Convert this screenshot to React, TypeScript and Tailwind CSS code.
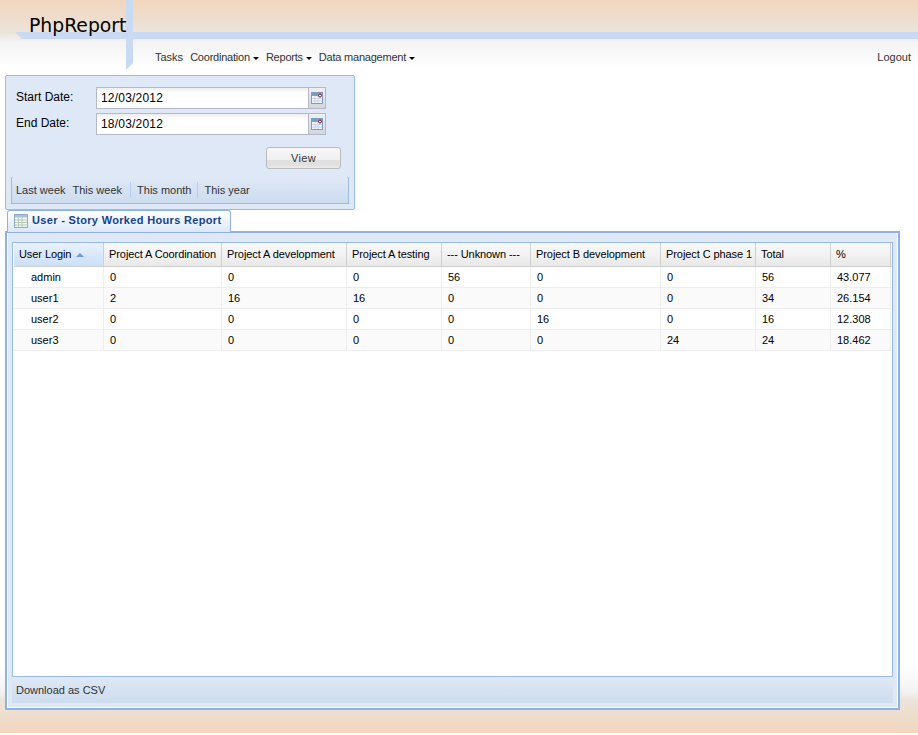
const menu = [
  { label: 'Tasks', arrow: false },
  { label: 'Coordination', arrow: true },
  { label: 'Reports', arrow: true },
  { label: 'Data management', arrow: true },
]

const columns = ['Project A Coordination', 'Project A development', 'Project A testing', '--- Unknown ---', 'Project B development', 'Project C phase 1', 'Total', '%']

const rows = [
  ['admin', '0', '0', '0', '56', '0', '0', '56', '43.077'],
  ['user1', '2', '16', '16', '0', '0', '0', '34', '26.154'],
  ['user2', '0', '0', '0', '0', '16', '0', '16', '12.308'],
  ['user3', '0', '0', '0', '0', '0', '24', '24', '18.462'],
]

const gridCols = 'grid grid-cols-[90px_118px_125px_95px_89px_130px_95px_75px_60px]'

function CalendarIcon() {
  return (
    <svg width="12" height="12" viewBox="0 0 12 12">
      <rect x="0.5" y="0.5" width="11" height="11" fill="#f4f7fb" stroke="#7f9dc4" />
      <rect x="1" y="1" width="10" height="3" fill="#7f9dc9" />
      <path d="M1 6.5h10M1 9h10M4 4v7M7 4v7" stroke="#c6d3e6" strokeWidth="1" />
      <circle cx="9" cy="3.5" r="1.5" fill="#fff" stroke="#8a1020" strokeWidth="1" />
    </svg>
  )
}

function TableIcon() {
  return (
    <svg width="14" height="14" viewBox="0 0 14 14">
      <rect x="0.5" y="0.5" width="13" height="13" fill="#f2f6fb" stroke="#8fa9c9" />
      <rect x="1" y="1" width="12" height="2.5" fill="#a9c2de" />
      <path d="M1 6h12M1 8.5h12M1 11h12M4.5 3.5v10M8 3.5v10" stroke="#b4cbb4" strokeWidth="1" />
    </svg>
  )
}

function DateField({ label, value }: { label: string; value: string }) {
  return (
    <div className="flex h-[22px] items-start">
      <div className="w-[80px] pt-[2px] text-[12px] leading-[16px] text-black">{label}</div>
      <div className="flex h-[22px] w-[230px]">
        <div className="h-[22px] w-[213px] border border-[#b5b8c8] bg-[linear-gradient(to_bottom,#eeeeee,#ffffff_5px)] pl-1 text-[12px] leading-[21px] tracking-[0.2px] text-black">{value}</div>
        <div className="flex h-[22px] w-[17px] items-center justify-center border border-l-0 border-[#b5b8c8] bg-[linear-gradient(to_bottom,#f0f0f0,#d4d6dc)]">
          <CalendarIcon />
        </div>
      </div>
    </div>
  )
}

export default function App() {
  return (
    <div className="relative h-[733px] w-full overflow-hidden bg-[linear-gradient(to_bottom,#f2d6bd_0px,#ebe3da_32px,#f3f3f3_42px,#ffffff_68px,#ffffff_665px,#f3f3f3_691px,#ebe3da_701px,#f2d6bd_733px)] font-['Liberation_Sans',sans-serif] text-[11px] text-[#333]">
      {/* cabecera */}
      <div className="relative h-[75px]">
        <svg className="absolute left-0 top-0" width="918" height="72" viewBox="0 0 918 72">
          <path d="M15 32H918V39H22Z" fill="#c9daf2" />
          <path d="M126 0H133V63L126 70Z" fill="#c9daf2" />
        </svg>
        <div className="absolute left-[29px] top-[14px] font-['DejaVu_Sans',sans-serif] text-[18.8px] leading-[24px] text-black">PhpReport</div>
        <div className="absolute inset-x-0 top-[50px] flex h-[14px] items-center justify-between pl-[155px] pr-[7px] leading-[14px]">
          <nav className="flex items-center gap-[7px]">
            {menu.map((m) => (
              <span key={m.label} className={`flex items-center ${m.arrow ? 'tracking-[-0.22px]' : ''}`}>
                {m.label}
                {m.arrow && <span className="ml-[3px] mt-[2px] h-0 w-0 border-x-[3px] border-t-[3px] border-x-transparent border-t-black" />}
              </span>
            ))}
          </nav>
          <span>Logout</span>
        </div>
      </div>

      {/* filtros */}
      <div className="relative ml-[5px] h-[135px] w-[350px] rounded-[2px] border border-[#99bbe8] bg-[#dfe8f6] p-[5px]">
        <div className="flex flex-col gap-1 pl-[5px] pt-[6px]">
          <DateField label="Start Date:" value="12/03/2012" />
          <DateField label="End Date:" value="18/03/2012" />
        </div>
        <div className="mt-3 flex justify-end pr-[8px]">
          <button className="h-[22px] w-[75px] rounded-[3px] border border-[#bbb] bg-[linear-gradient(to_bottom,#f7f7f7_0,#f0f0f0_60%,#e0e0e0_60%,#e0e0e0_85%,#ececec_100%)] text-[11px] leading-[20px] tracking-[0.4px] text-[#333]">View</button>
        </div>
        <div className="mt-2 flex h-[27px] w-[338px] items-center border-x border-b border-[#99bbe8] bg-[linear-gradient(to_bottom,#dfe8f6,#cddcee)] pl-1 text-[#333]">
          <span>Last week</span>
          <span className="ml-[7px] pr-[8px]">This week</span>
          <span className="border-l border-[#b3cdf0] pl-[6px] pr-[6px]">This month</span>
          <span className="border-l border-[#b3cdf0] pl-[6px]">This year</span>
        </div>
      </div>

      {/* pestaña */}
      <div className="relative z-10 ml-[7px] flex h-[22px] w-[224px] items-center gap-1 rounded-t-[3px] border border-b-0 border-[#8db2e3] bg-[linear-gradient(to_bottom,#ffffff,#dbe8fa)] pb-[2px] pl-[6px] text-[11px] font-bold tracking-[0.33px] whitespace-nowrap text-[#15428b]">
        <TableIcon />
        <span>User - Story Worked Hours Report</span>
      </div>

      {/* panel principal */}
      <div className="-mt-px ml-[5px] h-[479px] w-[895px] border-2 border-[#8db2e3] bg-[#dfe8f6] pl-[5px] pt-[9px] shadow-[inset_1px_0_0_#fff,inset_-1px_0_0_#fff,inset_0_-1px_0_#fff]">
        <div className="h-[435px] w-[881px] border border-[#99bbe8] bg-white">
          <div className={`${gridCols} ml-px h-[24px] border-b border-[#d0d0d0] bg-[linear-gradient(to_bottom,#f9f9f9,#f2f2f2_50%,#e8e8e8)] tracking-[-0.08px] text-black`}>
            <div className="flex items-center gap-[4px] border-r border-[#d0d0d0] bg-[linear-gradient(to_bottom,#ebf3fd,#d9e8fb_50%,#cde0f9)] pl-[5px]">
              User Login
              <span className="ml-[1px] h-0 w-0 border-x-[4px] border-b-[4px] border-x-transparent border-b-[#6c9bd6]" />
            </div>
            {columns.map((c) => (
              <div key={c} className="flex items-center whitespace-nowrap border-r border-[#d0d0d0] pl-[5px]">{c}</div>
            ))}
          </div>
          {rows.map((row, i) => (
            <div key={row[0]} className={`${gridCols} ml-px h-[21px] border-b border-[#ededed] text-black ${i % 2 ? 'bg-[#fafafa]' : 'bg-white'}`}>
              {row.map((v, j) => (
                <div key={j} className={`flex items-center border-r border-[#eeeeee] ${j === 0 ? 'pl-[17px]' : 'pl-[6px]'}`}>{v}</div>
              ))}
            </div>
          ))}
        </div>
        <div className="flex h-[26px] w-[881px] items-center bg-[linear-gradient(to_bottom,#dfe8f6,#cddcee)] pl-1 text-[#333]">Download as CSV</div>
      </div>
    </div>
  )
}
